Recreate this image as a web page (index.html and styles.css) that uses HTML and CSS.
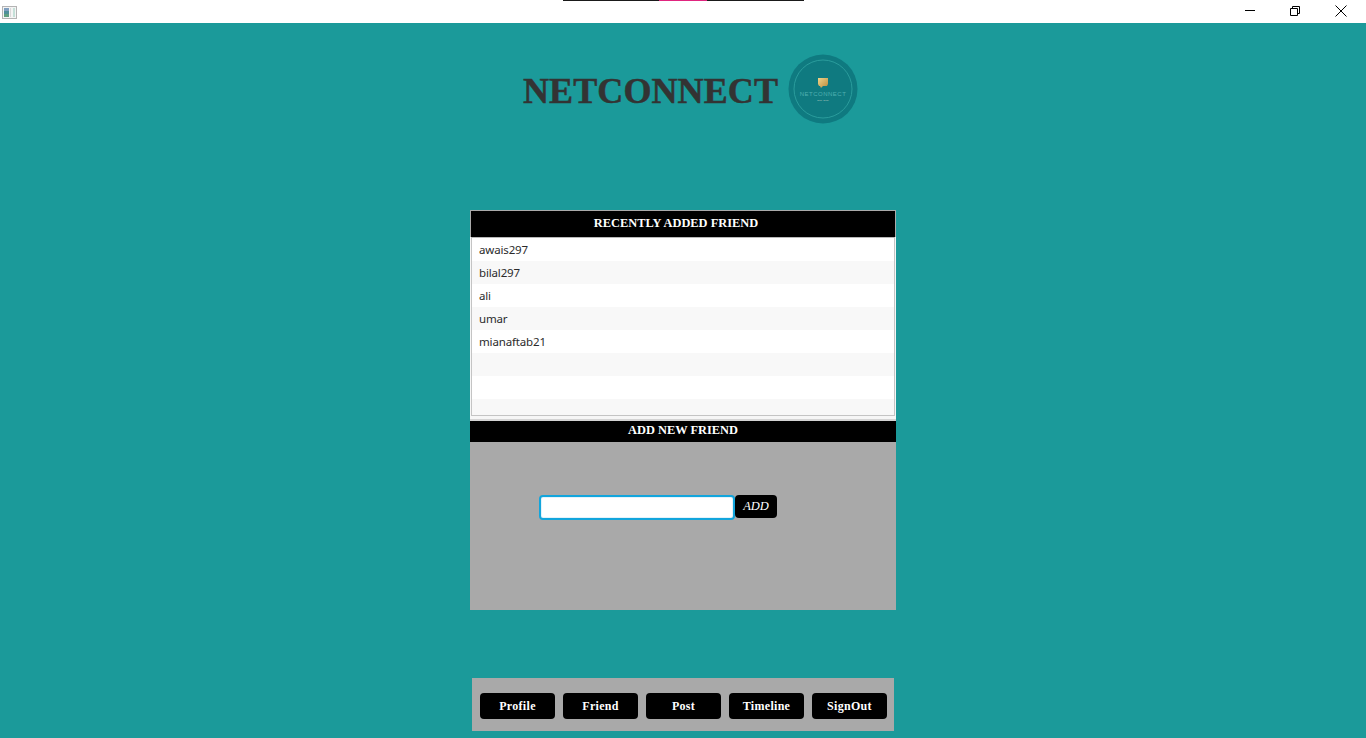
FILE: index.html
```html
<!DOCTYPE html>
<html lang="en">
<head>
<meta charset="utf-8">
<title>NetConnect</title>
<link rel="stylesheet" href="styles.css">
</head>
<body>
<header class="titlebar">
  <svg class="app-icon" width="15" height="13" viewBox="0 0 15 13">
    <rect x="0.5" y="0.5" width="14" height="12" fill="#f4f4f4" stroke="#b4b4b4"/>
    <rect x="2" y="2" width="5" height="9" fill="#4f8f9a"/>
    <rect x="2" y="2" width="5" height="3" fill="#7f9fc0"/>
    <rect x="2" y="8" width="5" height="3" fill="#5f9f80"/>
    <rect x="8" y="2" width="1" height="9" fill="#d8d8d8"/>
    <rect x="11" y="2" width="2" height="9" fill="#c4e0d8"/>
  </svg>
  <div class="strip"><span class="strip-dark strip-a"></span><span class="strip-pink"></span><span class="strip-dark strip-b"></span></div>
  <div class="controls">
    <span class="control"><svg width="12" height="12" viewBox="0 0 12 12"><path d="M1 5.500h10" stroke="#000" fill="none"/></svg></span>
    <span class="control"><svg width="12" height="12" viewBox="0 0 12 12"><path d="M0.500 3.500h7v7h-7zM2.500 3.500v-2h7v7h-2" stroke="#000" fill="none"/></svg></span>
    <span class="control"><svg width="12" height="12" viewBox="0 0 12 12"><path d="M0.500 0.500l11 11M11.500 0.500l-11 11" stroke="#000" fill="none"/></svg></span>
  </div>
</header>
<main class="main">
  <div class="brand">
    <h1 class="wordmark">NETCONNECT</h1>
    <svg class="logo" width="70" height="70" viewBox="0 0 70 70">
      <defs>
        <linearGradient id="gold" x1="0" y1="0" x2="1" y2="1">
          <stop offset="0" stop-color="#f0d48a"/>
          <stop offset="1" stop-color="#b98a3c"/>
        </linearGradient>
      </defs>
      <circle cx="35" cy="35" r="34.500" fill="#0f7a80"/>
      <circle cx="35" cy="35" r="29" fill="none" stroke="#2a9c9c" stroke-width="1"/>
      <path d="M30 24h10v6l-1 2h-4l-2 2-1-2h-1l-1-2z" fill="url(#gold)"/>
      <text class="logo-name" x="35" y="42" text-anchor="middle">NETCONNECT</text>
      <text class="logo-sub" x="35" y="46.500" text-anchor="middle">EST. 2020</text>
    </svg>
  </div>
  <section class="panel">
    <h2 class="panel-head recent-head">RECENTLY ADDED FRIEND</h2>
    <div class="list-wrap">
      <ul class="list">
        <li>awais297</li>
        <li>bilal297</li>
        <li>ali</li>
        <li>umar</li>
        <li>mianaftab21</li>
        <li></li>
        <li></li>
        <li></li>
      </ul>
    </div>
    <h2 class="panel-head add-head">ADD NEW FRIEND</h2>
    <div class="add-body">
      <input class="add-input" type="text" aria-label="Friend name">
      <button class="add-btn" type="button">ADD</button>
    </div>
  </section>
  <nav class="nav">
    <button class="nav-btn" type="button">Profile</button>
    <button class="nav-btn" type="button">Friend</button>
    <button class="nav-btn" type="button">Post</button>
    <button class="nav-btn" type="button">Timeline</button>
    <button class="nav-btn" type="button">SignOut</button>
  </nav>
</main>
</body>
</html>
```
FILE: styles.css
```css
* { box-sizing: border-box; }
html, body { margin: 0; height: 738px; overflow: hidden; }
body { background: #1b9a9a; font-family: "Liberation Serif", serif; }

.titlebar {
  position: relative;
  display: flex;
  align-items: center;
  height: 23px;
  background: #fff;
  padding-left: 2px;
}
.app-icon { display: block; margin-top: 1px; }
.strip { position: absolute; left: 563px; top: 0; display: flex; height: 1px; }
.strip-dark { background: #1a1a1a; }
.strip-a { width: 96px; }
.strip-pink { width: 48px; background: #e0257f; }
.strip-b { width: 97px; }
.controls { display: flex; margin-left: auto; padding-right: 2px; }
.control { display: flex; align-items: center; justify-content: center; width: 46px; height: 23px; }
.control:nth-child(2) { width: 45px; }
.control svg { margin-top: -1px; }

.main { display: flex; flex-direction: column; align-items: center; }
.brand { display: flex; align-items: center; gap: 11px; margin-top: 31px; margin-left: 15px; height: 70px; }
.wordmark {
  margin: 3px 0 0;
  width: 254px;
  font: 700 36px/1 "Liberation Serif", serif;
  letter-spacing: 0.100px;
  -webkit-text-stroke: 0.500px #333;
  color: #333;
  white-space: nowrap;
}
.logo { display: block; }
.logo-name { font: 6px "Liberation Sans", sans-serif; letter-spacing: 0.500px; fill: #4fb0b0; }
.logo-sub { font: 2.500px "Liberation Sans", sans-serif; fill: #a8c4bc; }

.panel { width: 426px; height: 400px; margin-top: 86px; background: #a9a9a9; display: flex; flex-direction: column; }
.panel-head {
  margin: 0;
  height: 27px;
  background: #000;
  border: 1px solid #aaa;
  border-bottom: 0;
  color: #fff;
  font: 700 12.400px/25px "Liberation Serif", serif;
  text-align: center;
  flex: none;
}
.recent-head { padding-right: 14px; }
.list-wrap {
  height: 184px;
  flex: none;
  padding: 0 1px 3px;
  background: #f6f6f6;
  border-bottom: 2px solid #d4d4d4;
}
.list {
  margin: 0;
  padding: 0;
  list-style: none;
  height: 179px;
  background: #fff;
  border: 1px solid #c4c4c4;
  border-top-color: #b8b8b8;
  overflow: hidden;
}
.list li {
  height: 23px;
  padding-left: 7px;
  font: 11.500px/24px "Noto Sans", sans-serif;
  letter-spacing: -0.150px;
  color: #2b2b2b;
}
.list li:nth-child(even) { background: #f8f8f8; }
.add-head { height: 21px; border: 0; line-height: 19px; }
.add-body { flex: 1; display: flex; align-items: flex-start; padding: 53px 0 0 69px; }
.add-input {
  width: 196px;
  height: 25px;
  padding: 0 6px;
  background: #fff;
  border: 2px solid #12a5dc;
  border-radius: 4px;
  box-shadow: inset 0 0 0 1px #e3f2fa;
  outline: none;
}
.add-btn {
  width: 42px;
  height: 23px;
  padding: 0;
  border: 0;
  border-radius: 4px;
  background: #000;
  color: #fff;
  font: italic 12.500px/23px "Liberation Serif", serif;
}
.nav {
  display: flex;
  gap: 8px;
  width: 422px;
  height: 53px;
  margin-top: 68px;
  padding: 15px 0 0 8px;
  background: #a9a9a9;
}
.nav-btn {
  width: 75px;
  height: 26px;
  padding: 0;
  border: 0;
  border-radius: 4px;
  background: #000;
  color: #fff;
  font: 700 12px/26px "Liberation Serif", serif;
  letter-spacing: 0.300px;
}
```
